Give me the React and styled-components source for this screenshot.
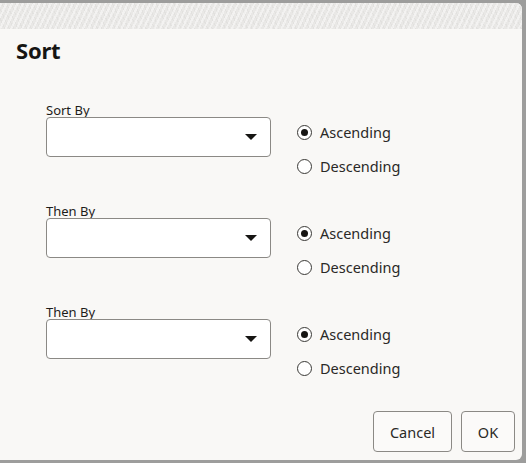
import React from 'react'
import styled, { createGlobalStyle } from 'styled-components'

const GlobalStyle = createGlobalStyle`
  html, body {
    margin: 0;
    padding: 0;
    background: #9b9b9b;
    font-family: "Noto Sans", "Open Sans", sans-serif;
    color: #161513;
  }
  * { box-sizing: border-box; }
`

const Backdrop = styled.div`
  width: 526px;
  height: 463px;
  padding-top: 3px;
  background: #9d9d9c;
  overflow: hidden;
`

const Dialog = styled.div`
  width: 522px;
  height: 457px;
  background: #f9f8f6;
  border-radius: 0 6px 6px 0;
  display: flex;
  flex-direction: column;
  overflow: hidden;
`

const HeaderBand = styled.div`
  height: 26px;
  flex: none;
  background-color: #e9e8e6;
  background-image:
    repeating-linear-gradient(115deg, rgba(255,255,255,0.45) 0 2px, transparent 2px 5px),
    repeating-linear-gradient(65deg, rgba(0,0,0,0.03) 0 1px, transparent 1px 4px);
`

const Title = styled.h2`
  margin: 6px 0 0 16px;
  font-size: 22px;
  font-weight: 700;
  line-height: 30px;
  letter-spacing: -0.2px;
`

const Body = styled.div`
  flex: 1;
  padding: 37px 0 0 46px;
  display: flex;
  flex-direction: column;
  gap: 26px;
`

const Group = styled.div`
  display: flex;
  align-items: flex-start;
  gap: 27px;
`

const Field = styled.div`
  display: flex;
  flex-direction: column;
`

const Label = styled.label`
  font-size: 13px;
  line-height: 16px;
  height: 16px;
  margin-bottom: -1px;
  color: #1d1c1a;
`

const SelectBox = styled.div`
  width: 225px;
  height: 40px;
  background: #fff;
  border: 1px solid #8b8985;
  border-radius: 4px;
  display: flex;
  align-items: center;
  justify-content: flex-end;
  padding-right: 13px;
`

const Caret = styled.span`
  width: 0;
  height: 0;
  border-left: 6px solid transparent;
  border-right: 6px solid transparent;
  border-top: 6px solid #161513;
`

const Options = styled.div`
  display: flex;
  flex-direction: column;
  gap: 12px;
  padding-top: 19px;
`

const Option = styled.label`
  display: flex;
  align-items: center;
  gap: 8px;
  font-size: 14.5px;
  line-height: 22px;
  color: #2a2926;
`

const Radio = styled.span`
  width: 15px;
  height: 15px;
  margin-left: -1px;
  border-radius: 50%;
  border: 1px solid #3a3936;
  background: #fff;
  display: flex;
  align-items: center;
  justify-content: center;
  &::after {
    content: '';
    width: 7px;
    height: 7px;
    border-radius: 50%;
    background: ${p => (p.checked ? '#161513' : 'transparent')};
  }
`

const Footer = styled.div`
  display: flex;
  justify-content: flex-end;
  gap: 9px;
  padding: 0 7px 8px 0;
`

const Button = styled.button`
  height: 41px;
  min-width: ${p => (p.wide ? '79px' : '54px')};
  padding: 0 14px;
  background: #fbfaf9;
  border: 1px solid #8b8985;
  border-radius: 4px;
  font-family: inherit;
  font-size: 14.5px;
  color: #2a2926;
`

const groups = ['Sort By', 'Then By', 'Then By']

export default function App() {
  return (
    <>
      <GlobalStyle />
      <Backdrop>
        <Dialog>
          <HeaderBand />
          <Title>Sort</Title>
          <Body>
            {groups.map((label, i) => (
              <Group key={i}>
                <Field>
                  <Label>{label}</Label>
                  <SelectBox>
                    <Caret />
                  </SelectBox>
                </Field>
                <Options>
                  <Option>
                    <Radio checked />
                    Ascending
                  </Option>
                  <Option>
                    <Radio />
                    Descending
                  </Option>
                </Options>
              </Group>
            ))}
          </Body>
          <Footer>
            <Button wide>Cancel</Button>
            <Button>OK</Button>
          </Footer>
        </Dialog>
      </Backdrop>
    </>
  )
}
